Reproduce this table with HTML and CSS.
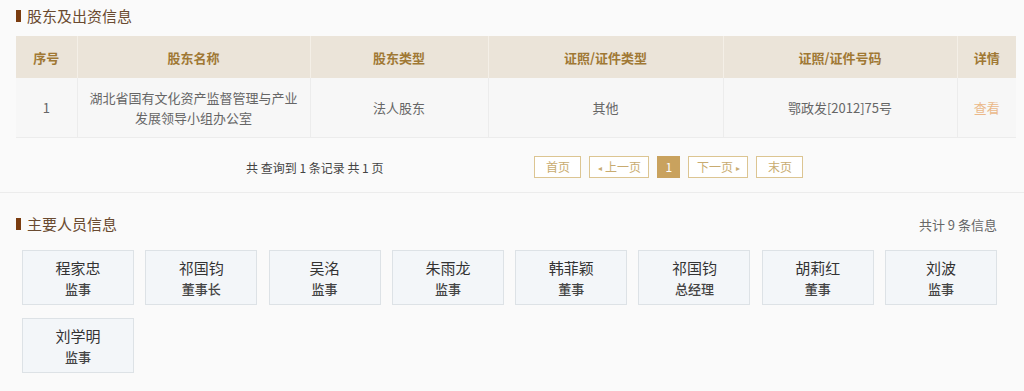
FILE: index.html
```html
<!DOCTYPE html>
<html lang="zh">
<head>
<meta charset="utf-8">
<link rel="stylesheet" href="styles.css">
</head>
<body>
<section class="sec sec-top">
  <h2 class="title"><span class="bar"></span>股东及出资信息</h2>
  <table class="tbl">
    <colgroup>
      <col style="width:61px"><col style="width:233px"><col style="width:178px"><col style="width:235px"><col style="width:234px"><col style="width:59px">
    </colgroup>
    <thead>
      <tr><th>序号</th><th>股东名称</th><th>股东类型</th><th>证照/证件类型</th><th>证照/证件号码</th><th>详情</th></tr>
    </thead>
    <tbody>
      <tr>
        <td>1</td>
        <td class="name">湖北省国有文化资产监督管理与产业<br>发展领导小组办公室</td>
        <td>法人股东</td>
        <td>其他</td>
        <td>鄂政发[2012]75号</td>
        <td><a class="view">查看</a></td>
      </tr>
    </tbody>
  </table>
  <div class="pager">
    <span class="pager-info">共 查询到 1 条记录 共 1 页</span>
    <div class="pager-btns">
      <span class="pbtn w47">首页</span>
      <span class="pbtn w60"><span class="tri">&#9666;</span>上一页</span>
      <span class="pbtn active">1</span>
      <span class="pbtn w60">下一页<span class="tri r">&#9656;</span></span>
      <span class="pbtn w47">末页</span>
    </div>
  </div>
</section>
<section class="sec sec-people">
  <div class="head">
    <h2 class="title"><span class="bar"></span>主要人员信息</h2>
    <span class="count">共计 9 条信息</span>
  </div>
  <div class="cards">
    <div class="card"><div class="pn">程家忠</div><div class="pr">监事</div></div>
    <div class="card"><div class="pn">祁国钧</div><div class="pr">董事长</div></div>
    <div class="card"><div class="pn">吴洺</div><div class="pr">监事</div></div>
    <div class="card"><div class="pn">朱雨龙</div><div class="pr">监事</div></div>
    <div class="card"><div class="pn">韩菲颖</div><div class="pr">董事</div></div>
    <div class="card"><div class="pn">祁国钧</div><div class="pr">总经理</div></div>
    <div class="card"><div class="pn">胡莉红</div><div class="pr">董事</div></div>
    <div class="card"><div class="pn">刘波</div><div class="pr">监事</div></div>
    <div class="card"><div class="pn">刘学明</div><div class="pr">监事</div></div>
  </div>
</section>
</body>
</html>
```
FILE: styles.css
```css
html, body {
  margin: 0;
  padding: 0;
  background: #fafafa;
  font-family: "Microsoft YaHei", "Noto Sans CJK SC", "Noto Sans", sans-serif;
  color: #666;
}
.sec-top {
  padding: 6px 8px 14px 16px;
  border-bottom: 1px solid #ececec;
}
.title {
  margin: 0;
  height: 20px;
  line-height: 20px;
  font-size: 15px;
  font-weight: normal;
  color: #6a4a30;
  display: flex;
  align-items: center;
}
.bar {
  display: inline-block;
  width: 5px;
  height: 12px;
  background: #7a3c10;
  margin-right: 6px;
}
.tbl {
  margin-top: 10px;
  width: 1000px;
  border-collapse: collapse;
  table-layout: fixed;
  font-size: 13px;
}
.tbl th {
  height: 42px;
  padding: 0;
  background: #ebe4d9;
  color: #a07834;
  font-weight: bold;
  border-left: 1px solid #f4efe7;
}
.tbl th:first-child, .tbl td:first-child { border-left: none; }
.tbl td {
  height: 59px;
  padding: 0;
  background: #f7f7f7;
  text-align: center;
  color: #666;
  border-left: 1px solid #ececec;
  border-bottom: 1px solid #ececec;
  line-height: 20px;
}
.view { color: #ebb98a; }
.pager {
  display: flex;
  align-items: center;
  margin-top: 18px;
  height: 22px;
  font-size: 12px;
}
.pager-info {
  margin-left: 230px;
  color: #444;
}
.pager-btns {
  display: flex;
  gap: 8px;
  margin-left: 151px;
}
.pbtn {
  box-sizing: border-box;
  height: 22px;
  line-height: 20px;
  border: 1px solid #dcc592;
  color: #c8ab70;
  text-align: center;
  font-size: 12px;
  background: #fff;
}
.w47 { width: 47px; }
.w60 { width: 60px; }
.pbtn.active {
  width: 23px;
  background: #c9a25e;
  border-color: #c9a25e;
  color: #fff;
}
.tri { font-size: 8px; margin-right: 3px; vertical-align: 1px; }
.tri.r { margin-right: 0; margin-left: 3px; }
.sec-people {
  padding: 21px 27px 0 16px;
}
.head {
  display: flex;
  justify-content: space-between;
  align-items: center;
}
.count {
  font-size: 13px;
  color: #666;
}
.cards {
  display: flex;
  flex-wrap: wrap;
  column-gap: 11.3px;
  row-gap: 13px;
  margin-top: 16px;
  padding-left: 6px;
  width: 980px;
}
.card {
  box-sizing: border-box;
  width: 112px;
  height: 55px;
  background: #f3f6f9;
  border: 1px solid #dde2e6;
  text-align: center;
  padding-top: 7px;
}
.pn {
  font-size: 15px;
  color: #333;
  line-height: 20px;
}
.pr {
  font-size: 13px;
  font-weight: 500;
  color: #444;
  line-height: 20px;
  margin-top: 1px;
}
```
